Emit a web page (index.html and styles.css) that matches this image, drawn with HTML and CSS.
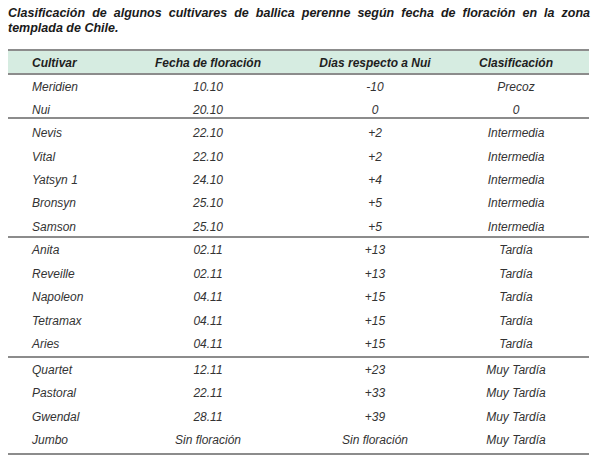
FILE: index.html
```html
<!DOCTYPE html>
<html lang="es">
<head>
<meta charset="utf-8">
<title>Clasificación de cultivares</title>
<link rel="stylesheet" href="styles.css">
</head>
<body>
<div class="page">
  <p class="title">Clasificación de algunos cultivares de ballica perenne según fecha de floración en la zona templada de Chile.</p>
  <table class="data">
    <colgroup>
      <col class="c1"><col class="c2"><col class="c3"><col class="c4">
    </colgroup>
    <thead>
      <tr><th class="name">Cultivar</th><th>Fecha de floración</th><th>Días respecto a Nui</th><th class="last">Clasificación</th></tr>
    </thead>
    <tbody class="g1">
      <tr><td class="name">Meridien</td><td>10.10</td><td>-10</td><td class="last">Precoz</td></tr>
      <tr><td class="name">Nui</td><td>20.10</td><td>0</td><td class="last">0</td></tr>
    </tbody>
    <tbody class="g2">
      <tr><td class="name">Nevis</td><td>22.10</td><td>+2</td><td class="last">Intermedia</td></tr>
      <tr><td class="name">Vital</td><td>22.10</td><td>+2</td><td class="last">Intermedia</td></tr>
      <tr><td class="name">Yatsyn 1</td><td>24.10</td><td>+4</td><td class="last">Intermedia</td></tr>
      <tr><td class="name">Bronsyn</td><td>25.10</td><td>+5</td><td class="last">Intermedia</td></tr>
      <tr><td class="name">Samson</td><td>25.10</td><td>+5</td><td class="last">Intermedia</td></tr>
    </tbody>
    <tbody class="g3">
      <tr><td class="name">Anita</td><td>02.11</td><td>+13</td><td class="last">Tardía</td></tr>
      <tr><td class="name">Reveille</td><td>02.11</td><td>+13</td><td class="last">Tardía</td></tr>
      <tr><td class="name">Napoleon</td><td>04.11</td><td>+15</td><td class="last">Tardía</td></tr>
      <tr><td class="name">Tetramax</td><td>04.11</td><td>+15</td><td class="last">Tardía</td></tr>
      <tr><td class="name">Aries</td><td>04.11</td><td>+15</td><td class="last">Tardía</td></tr>
    </tbody>
    <tbody class="g4">
      <tr><td class="name">Quartet</td><td>12.11</td><td>+23</td><td class="last">Muy Tardía</td></tr>
      <tr><td class="name">Pastoral</td><td>22.11</td><td>+33</td><td class="last">Muy Tardía</td></tr>
      <tr><td class="name">Gwendal</td><td>28.11</td><td>+39</td><td class="last">Muy Tardía</td></tr>
      <tr><td class="name">Jumbo</td><td>Sin floración</td><td>Sin floración</td><td class="last">Muy Tardía</td></tr>
    </tbody>
  </table>
</div>
</body>
</html>
```
FILE: styles.css
```css
html, body {
  margin: 0;
  padding: 0;
  background: #ffffff;
}

.page {
  padding: 6px 10px 0 8px;
  font-family: "Liberation Sans", Arial, sans-serif;
  font-style: italic;
}

.title {
  margin: 0;
  font-size: 12.5px;
  line-height: 15px;
  font-weight: bold;
  color: #1a1a1a;
  text-align: justify;
  text-align-last: left;
}

.data {
  margin-top: 13px;
  width: 581px;
  border-collapse: collapse;
  table-layout: fixed;
  font-size: 12px;
}

.c1 { width: 112px; }
.c2 { width: 176px; }
.c3 { width: 158px; }
.c4 { width: 135px; }

.data thead tr {
  background: #d6ece1;
  border-top: 2px solid #8c8c8c;
  border-bottom: 2px solid #8c8c8c;
}

.data th {
  height: 21px;
  padding: 1px 0 0 0;
  font-weight: bold;
  color: #1e1e1e;
  text-align: center;
  vertical-align: middle;
}

.data tbody {
  border-top: 2px solid #8c8c8c;
}

.data tbody.g1 {
  border-top: none;
}

.data tbody.g4 {
  border-bottom: 2px solid #8c8c8c;
}

.data td {
  height: 23.5px;
  padding: 0;
  color: #333333;
  text-align: center;
  vertical-align: middle;
}

.data .g1 tr:first-child td {
  height: 20.5px;
  padding-top: 1.5px;
}

.data .g1 tr:last-child td {
  height: 15.2px;
  padding-top: 5px;
}

.data .g2 td {
  height: 18.94px;
  padding-top: 4.5px;
}

.data .g3 td {
  height: 23.56px;
}

.data .g4 td {
  height: 23.4px;
}

.data .g4 tr:last-child td {
  padding-bottom: 1.6px;
}

.data .name {
  text-align: left;
  padding-left: 24px;
}

.data .last {
  padding-right: 11px;
}
```
